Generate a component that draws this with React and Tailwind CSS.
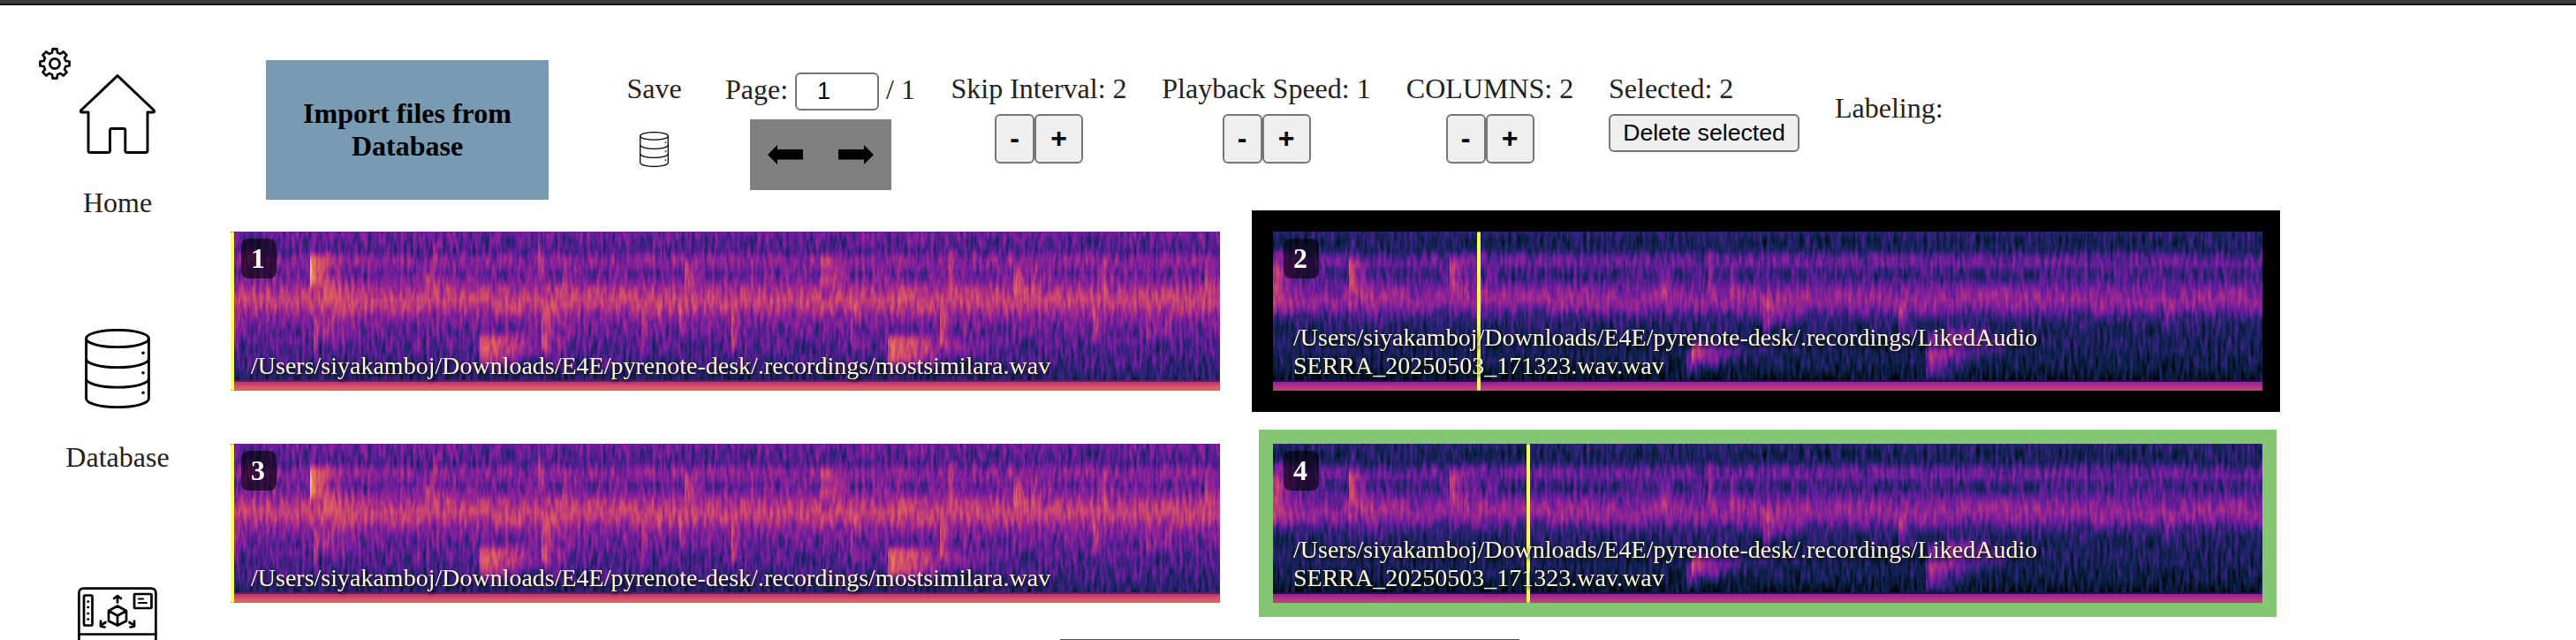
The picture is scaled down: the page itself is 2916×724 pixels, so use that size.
import React from "react";

const PALETTE = {
  r: "0 0.03 0.165 0.43 0.62 0.79 0.88 0.94 0.98",
  g: "0 0.12 0.14 0.115 0.16 0.27 0.39 0.62 0.9",
  b: "0.02 0.24 0.46 0.62 0.56 0.44 0.36 0.33 0.5",
};

// Energy by height: [y, level] pairs over the 168px band above the floor.
const LOUD = {
  seed: 4,
  noise: 0.47,
  profile: [[0, 0.38], [10, 0.34], [22, 0.32], [31, 0.44], [38, 0.43], [47, 0.36], [56, 0.42], [66, 0.53], [77, 0.61], [86, 0.56], [96, 0.44], [108, 0.37], [130, 0.32], [150, 0.28], [168, 0.22]],
  floor: ["#8a8a8a", "#bcbcbc"],
  edge: "#5c2250",
  // x, y, width, height, strength
  events: [
    [90, 26, 40, 36, 0.5], [90, 26, 16, 34, 0.5], [90, 4, 5, 70, 0.16], [94, 96, 8, 42, 0.46], [104, 55, 50, 75, 0.2], [220, 48, 40, 20, 0.24],
    [229, 12, 9, 34, 0.28], [282, 118, 62, 34, 0.46], [284, 116, 110, 24, 0.24], [348, 10, 9, 44, 0.26], [352, 93, 11, 42, 0.5], [356, 80, 40, 60, 0.18],
    [376, 40, 12, 34, 0.32], [465, 86, 10, 52, 0.3], [483, 78, 8, 26, 0.24], [514, 35, 16, 30, 0.4], [508, 86, 9, 28, 0.26], [567, 93, 11, 40, 0.4],
    [668, 30, 34, 32, 0.34], [702, 78, 12, 52, 0.24], [744, 118, 64, 34, 0.54], [747, 120, 130, 22, 0.28], [755, 40, 14, 60, 0.16],
    [803, 88, 14, 42, 0.42], [813, 20, 11, 46, 0.3], [886, 40, 18, 32, 0.46], [906, 40, 15, 34, 0.26], [986, 28, 10, 40, 0.34],
    [976, 90, 13, 34, 0.38], [1036, 93, 14, 32, 0.22], [1058, 88, 12, 34, 0.2], [1102, 44, 34, 28, 0.24], [0, 96, 20, 24, 0.18],
  ],
};

const QUIET = {
  seed: 11,
  noise: 0.42,
  profile: [[0, 0.23], [12, 0.18], [21, 0.21], [29, 0.34], [37, 0.37], [44, 0.29], [51, 0.27], [60, 0.35], [69, 0.44], [78, 0.47], [87, 0.4], [95, 0.29], [106, 0.21], [130, 0.185], [150, 0.155], [168, 0.08]],
  floor: ["#707070", "#979797"],
  edge: "#2c0c44",
  events: [
    [-3, 22, 40, 70, 0.24], [0, 38, 14, 28, 0.34], [86, 32, 24, 38, 0.42], [86, 12, 8, 90, 0.18], [200, 30, 22, 38, 0.42], [216, 40, 40, 40, 0.14], [100, 50, 60, 60, 0.1],
    [310, 60, 90, 28, 0.06], [440, 42, 14, 30, 0.32], [493, 22, 8, 46, 0.24], [518, 41, 11, 32, 0.28], [474, 124, 60, 26, 0.36], [472, 128, 110, 18, 0.14],
    [468, 134, 22, 28, 0.28], [555, 72, 12, 42, 0.36], [560, 80, 50, 28, 0.18], [708, 80, 16, 36, 0.3], [742, 114, 90, 30, 0.32], [739, 134, 50, 32, 0.3], [765, 110, 90, 24, 0.16], [1008, 78, 16, 30, 0.16],
  ],
};

const grey = (v) => {
  const n = Math.round(v * 255);
  return `rgb(${n},${n},${n})`;
};

function Spectrogram({ id, data }) {
  return (
    <svg width="1120" height="180" viewBox="0 0 1120 180" preserveAspectRatio="none" className="block h-full w-full">
      <defs>
        <linearGradient id={`${id}-profile`} x1="0" y1="0" x2="0" y2="168" gradientUnits="userSpaceOnUse">
          {data.profile.map(([y, v]) => (
            <stop key={y} offset={y / 168} stopColor={grey(v)} />
          ))}
        </linearGradient>
        <linearGradient id={`${id}-floor`} x1="0" y1="0" x2="0" y2="1">
          <stop offset="0" stopColor={data.floor[0]} />
          <stop offset="0.7" stopColor={data.floor[1]} />
        </linearGradient>
        <linearGradient id={`${id}-decay`}>
          <stop offset="0" stopColor="#fff" stopOpacity="1" />
          <stop offset="0.35" stopColor="#fff" stopOpacity="0.7" />
          <stop offset="1" stopColor="#fff" stopOpacity="0" />
        </linearGradient>
        <filter id={`${id}-soft`} x="0" y="0" width="1120" height="180" filterUnits="userSpaceOnUse" colorInterpolationFilters="sRGB">
          <feGaussianBlur stdDeviation="0.7 4" />
        </filter>
        <filter id={`${id}-heat`} x="0" y="0" width="1120" height="169" filterUnits="userSpaceOnUse" colorInterpolationFilters="sRGB">
          <feTurbulence type="fractalNoise" baseFrequency="0.27 0.05" numOctaves="2" seed={data.seed} />
          <feColorMatrix type="matrix" values="0 0 0 1 0  0 0 0 1 0  0 0 0 1 0  0 0 0 0 1" result="grain" />
          <feComposite in="SourceGraphic" in2="grain" operator="arithmetic" k1="0" k2="1" k3={data.noise} k4={-data.noise / 2} />
          <feColorMatrix type="matrix" values="1 0 0 0 0  0 1 0 0 0  0 0 1 0 0  0 0 0 0 1" />
          <feComponentTransfer>
            <feFuncR type="table" tableValues={PALETTE.r} />
            <feFuncG type="table" tableValues={PALETTE.g} />
            <feFuncB type="table" tableValues={PALETTE.b} />
          </feComponentTransfer>
        </filter>
        <filter id={`${id}-tint`} x="0" y="170" width="1120" height="10" filterUnits="userSpaceOnUse" colorInterpolationFilters="sRGB">
          <feComponentTransfer>
            <feFuncR type="table" tableValues={PALETTE.r} />
            <feFuncG type="table" tableValues={PALETTE.g} />
            <feFuncB type="table" tableValues={PALETTE.b} />
          </feComponentTransfer>
        </filter>
      </defs>
      <g filter={`url(#${id}-heat)`}>
        <rect width="1120" height="180" fill={`url(#${id}-profile)`} />
        <g filter={`url(#${id}-soft)`}>
          {data.events.map(([x, y, w, h, s], i) => (
            <rect key={i} x={x} y={y} width={w} height={h} fill={`url(#${id}-decay)`} opacity={s} />
          ))}
        </g>
      </g>
      <rect y="168" width="1120" height="3" fill={data.edge} />
      <g filter={`url(#${id}-tint)`}>
        <rect y="170" width="1120" height="10" fill={`url(#${id}-floor)`} />
      </g>
    </svg>
  );
}

function Tile({ n, data, path, cursor }) {
  return (
    <div className="relative h-[180px] w-[1120px] overflow-hidden">
      <Spectrogram id={`spec${n}`} data={data} />
      <div className={`absolute top-0 h-full w-1 rounded-[2px] bg-[#ffff4d] ${cursor}`} />
      <div className="absolute left-3 top-2 flex h-[45px] w-10 items-center justify-center rounded-lg bg-black/60 pr-0.5 text-[32px] font-bold leading-[37px] text-white">
        {n}
      </div>
      <div className="absolute bottom-3 left-[23px] whitespace-pre-line text-[28px] leading-8 text-[#fbfad0] [text-shadow:2px_2px_4px_#000]">{path}</div>
    </div>
  );
}

function DatabaseIcon({ className }) {
  return (
    <svg viewBox="0 0 74 90" preserveAspectRatio="none" fill="none" stroke="#000" strokeWidth="2.9" className={className}>
      <ellipse cx="37" cy="11" rx="35.4" ry="9.6" />
      <path d="M1.6 11v68c0 5.300 15.800 9.600 35.400 9.600s35.400-4.300 35.400-9.600V11" />
      <path d="M1.600 34c0 5.300 15.800 9.600 35.400 9.600s35.400-4.300 35.400-9.600M1.600 56.500c0 5.300 15.800 9.600 35.400 9.600s35.400-4.300 35.400-9.600" />
      <g fill="#000" stroke="none">
        <circle cx="66" cy="27.300" r="1.800" />
        <circle cx="66" cy="49.800" r="1.800" />
        <circle cx="66" cy="72.300" r="1.800" />
      </g>
    </svg>
  );
}

function GearIcon() {
  return (
    <svg viewBox="0 0 36 36" fill="none" stroke="#000" strokeWidth="2.600" strokeLinejoin="round" className="ml-11 h-9 w-9 shrink-0">
      <circle cx="18" cy="18" r="5.600" />
      <path d="M15.500 1.400h5l.5 4.200 3.400 1.400 3.300-2.600 3.900 3.900-2.600 3.300 1.400 3.400 4.200.5v5l-4.200.5-1.400 3.400 2.600 3.300-3.900 3.900-3.300-2.600-3.400 1.400-.5 4.200h-5l-.5-4.200-3.400-1.400-3.300 2.600-3.900-3.900 2.600-3.300-1.400-3.400-4.200-.5v-5l4.200-.5 1.400-3.400-2.600-3.300 3.900-3.900 3.300 2.600 3.400-1.400z" />
    </svg>
  );
}

function HomeIcon() {
  return (
    <svg viewBox="0 0 86 90" fill="none" stroke="#000" strokeWidth="2.900" strokeLinejoin="round" className="h-[90px] w-[86px]">
      <path d="M43 1.600 1.500 41c-.4 1.200 0 2 1.200 2H10v43.500c0 1.400.6 2 2 2h20.500c1.300 0 2-.6 2-2V63.500c0-1.400.7-2 2-2h13.300c1.300 0 2 .6 2 2v23c0 1.400.6 2 2 2H75c1.400 0 2-.6 2-2V43h6.500c1.200 0 1.500-.8 1-2z" />
    </svg>
  );
}

function ModelIcon() {
  return (
    <svg viewBox="0 0 90 90" fill="none" stroke="#000" strokeWidth="2.700" strokeLinejoin="round" strokeLinecap="round" className="h-[90px] w-[90px]">
      <rect x="1.400" y="1.600" width="87" height="80" rx="5" />
      <path d="M1.400 53.500h87" />
      <rect x="7" y="9.500" width="9.500" height="34" rx="1.500" />
      <path d="M11.500 16.500h.5M11.500 23h.5M11.500 30h.5M11.500 36.500h.5" />
      <rect x="64" y="8" width="19.500" height="16" rx="1" />
      <path d="M69 13.500h5M69 18h9" strokeWidth="2.200" />
      <path d="M45 21.500 55 27v11.500L45 43.500 35 38.500V27zM35 27l10 5.500L55 27M45 32.500v11" />
      <path d="M45 17.500v-7M41 13l4-3 4 3M31.500 40 26 43.500M26 38.500v6l4.500 1M58.500 40l5.500 3.500M64 38.500v6l-4.500 1" />
    </svg>
  );
}

function NavItem({ icon, label, className }) {
  return (
    <div className={`flex w-[266px] shrink-0 flex-col items-center ${className}`}>
      {icon}
      {label && <span className="mt-[37px] text-[32px] leading-[37px]">{label}</span>}
    </div>
  );
}

function Arrow({ flip }) {
  return (
    <svg viewBox="0 0 40 22" className={flip ? "h-[22px] w-10 -scale-x-100" : "h-[22px] w-10"}>
      <path d="M0 11 11 0v5h29v11.500H11V22z" fill="#000" />
    </svg>
  );
}

const BUTTON = "flex items-center justify-center rounded-[6px] border-2 border-[#767676] bg-[#efefef] font-['Liberation_Sans',Arial,sans-serif] text-black";

function Stepper({ label, width }) {
  return (
    <div className={`flex flex-col items-center ${width}`}>
      <span className="whitespace-nowrap">{label}</span>
      <div className="mt-2.5 flex text-[32px] font-bold">
        <button className={`${BUTTON} h-14 w-[45px] pb-0.5`}>-</button>
        <button className={`${BUTTON} h-14 w-[55px] pb-0.5`}>+</button>
      </div>
    </div>
  );
}

const MOST = "/Users/siyakamboj/Downloads/E4E/pyrenote-desk/.recordings/mostsimilara.wav";
const LIKED = "/Users/siyakamboj/Downloads/E4E/pyrenote-desk/.recordings/LikedAudio\nSERRA_20250503_171323.wav.wav";

export default function App() {
  return (
    <div className="flex h-[724px] w-[2916px] flex-col overflow-hidden bg-white font-['Liberation_Serif','Times_New_Roman',serif] text-[#222]">
      <div className="h-[6px] shrink-0 border-b-2 border-[#111] bg-[#3b3a38]" />
      <div className="flex min-h-0 flex-1">
        <nav className="flex w-[261px] shrink-0 flex-col pt-12">
          <GearIcon />
          <NavItem className="-mt-1.5" icon={<HomeIcon />} label="Home" />
          <NavItem className="mt-[124px]" icon={<DatabaseIcon className="h-[90px] w-[74px]" />} label="Database" />
          <NavItem className="mt-[128px]" icon={<ModelIcon />} />
        </nav>
        <main className="flex flex-col">
          <header className="flex h-[256px] items-start pl-10 text-[32px] leading-[37px]">
            <button className="mt-[62px] h-[158px] w-80 bg-[#789bb3] px-9 font-bold text-black">Import files from Database</button>
            <div className="ml-20 flex gap-[41px] pt-[76px]">
              <div className="flex w-[79px] flex-col items-center">
                <span>Save</span>
                <DatabaseIcon className="mt-[30px] h-10 w-[33px]" />
              </div>
              <div className="flex w-[215px] flex-col">
                <div className="flex h-[43px] items-center gap-2 whitespace-nowrap">
                  <span className="-mt-1">Page:</span>
                  <div className="flex h-[43px] w-24 items-center rounded-[6px] border-2 border-[#767676] pl-[23px] font-['Liberation_Sans',Arial,sans-serif] text-[27px] text-black">1</div>
                  <span className="-mt-1">/ 1</span>
                </div>
                <div className="ml-7 mt-2.5 flex h-20 w-40 items-center justify-between bg-[#808080] px-5">
                  <Arrow />
                  <Arrow flip />
                </div>
              </div>
              <Stepper label="Skip Interval: 2" width="w-[198px]" />
              <Stepper label="Playback Speed: 1" width="w-[235px]" />
              <Stepper label="COLUMNS: 2" width="w-[189px]" />
              <div className="-ml-px flex w-[215px] flex-col items-start">
                <span>Selected: 2</span>
                <button className={`${BUTTON} mt-2.5 h-[43px] w-[216px] whitespace-nowrap text-[26.67px]`}>Delete selected</button>
              </div>
              <span className="pt-[22px]">Labeling:</span>
            </div>
          </header>
          <section className="grid grid-cols-[1120px_1120px] gap-[60px]">
            <Tile n={1} data={LOUD} path={MOST} cursor="left-0" />
            <div className="-my-6 -ml-6 -mr-5 bg-black py-6 pl-6 pr-5">
              <Tile n={2} data={QUIET} path={LIKED} cursor="left-[231px]" />
            </div>
            <Tile n={3} data={LOUD} path={MOST} cursor="left-0" />
            <div className="-m-4 bg-[#84c672] p-4">
              <Tile n={4} data={QUIET} path={LIKED} cursor="left-[287px]" />
            </div>
          </section>
          <div className="ml-[939px] mt-[41px] h-px w-[520px] shrink-0 bg-[#555]" />
        </main>
      </div>
    </div>
  );
}
